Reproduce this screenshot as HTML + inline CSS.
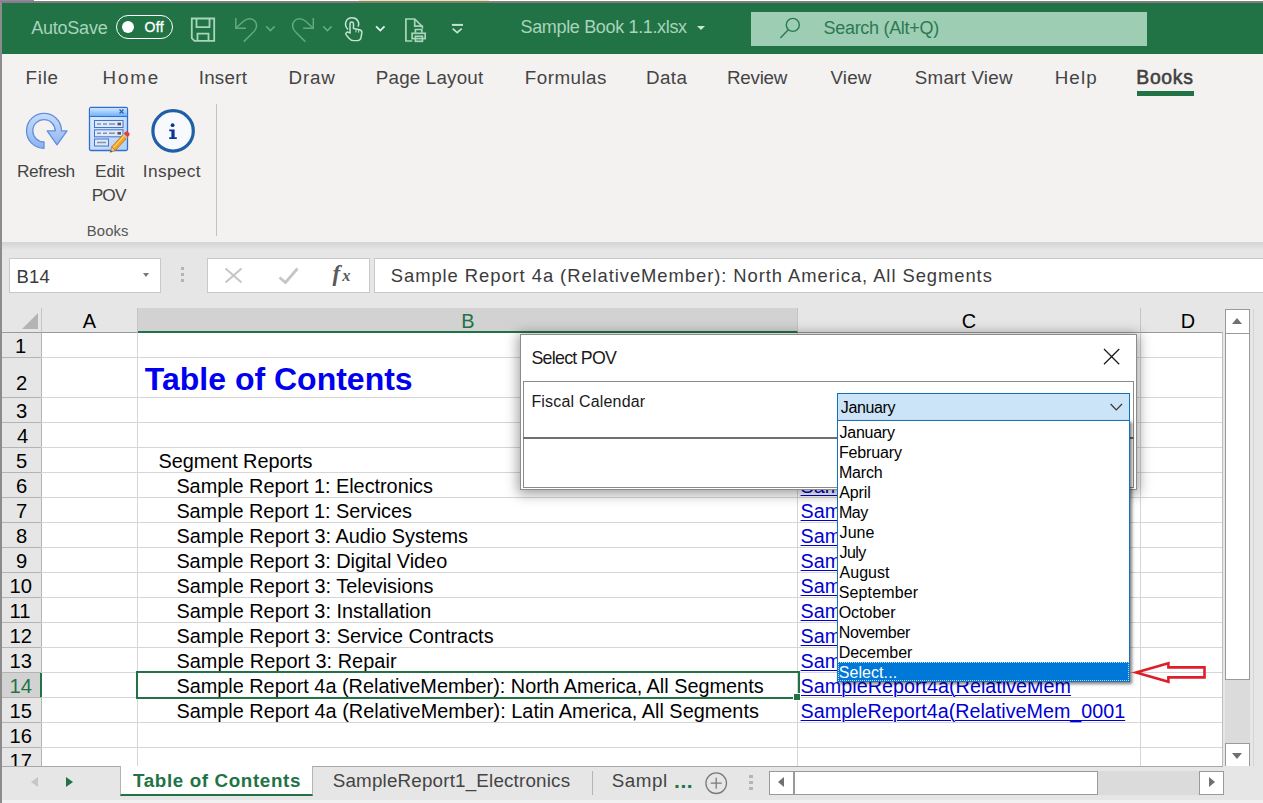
<!DOCTYPE html>
<html><head><meta charset="utf-8"><title>Sample Book 1.1.xlsx</title>
<style>
*{box-sizing:border-box;margin:0;padding:0}
html,body{width:1263px;height:803px;overflow:hidden;background:#f3f2f1;font-family:"Liberation Sans",sans-serif;}
.a{position:absolute}
#root{position:relative;width:1263px;height:803px;overflow:hidden;background:#f3f2f1}
.t{position:absolute;white-space:nowrap;line-height:1}
.hl{position:absolute;left:41px;width:1181px;height:1px;background:#d6d6d6}
.vl{position:absolute;top:333px;width:1px;height:433px;background:#d6d6d6}
.rh{position:absolute;left:2px;width:40px;background:#e6e6e6;border-bottom:1px solid #b4b4b4;border-right:1px solid #b4b4b4}
.ch{position:absolute;top:308px;height:25px;background:#e6e6e6;border-right:1px solid #c4c4c4;border-bottom:1px solid #9a9a9a}
.lk{text-decoration:underline;text-decoration-thickness:1.4px;text-underline-offset:2.2px}
</style></head><body><div id="root">

<div class="a" style="left:0;top:0;width:1263px;height:1px;background:#fff"></div>
<div class="a" style="left:0;top:0;width:34px;height:1px;background:#9a82b0"></div>
<div class="a" style="left:359px;top:0;width:130px;height:1px;background:#efe9a0"></div>
<div class="a" style="left:0;top:1px;width:1263px;height:1.5px;background:#808080"></div>

<div class="a" style="left:0;top:2.500px;width:1263px;height:51.100px;background:#217346"></div>
<div class="t" style="left:31.30px;top:19.00px;font-size:18px;color:#a8d4bb;letter-spacing:-0.243px;">AutoSave</div>
<div class="a" style="left:115.8px;top:15.2px;width:57.2px;height:23.4px;border:1.4px solid #fff;border-radius:12px"></div>
<div class="a" style="left:122px;top:21px;width:12.2px;height:12.2px;border-radius:50%;background:#fff"></div>
<div class="t" style="left:144.40px;top:20.00px;font-size:14px;color:#fff;letter-spacing:0.400px;-webkit-text-stroke:0.35px #fff;">Off</div>
<svg class="a" style="left:0;top:0" width="500" height="53" viewBox="0 0 500 53" fill="none">
<g stroke="#a9d6bb" stroke-width="1.800">
<path d="M191.800 18.500 H214.200 V40.900 H194.500 L191.800 38.200 Z"/><path d="M196.500 18.700 V27.200 H209.500 V18.700"/><path d="M197.500 40.700 V33.700 H208.500 V40.700"/></g>
<g stroke="#62a883" stroke-width="1.500">
<path d="M235.800 18 V28.300 H246"/><path d="M236.300 27.800 L243.500 21.300 C247.500 17.800 252.500 18.200 255 21.300 C257.800 24.800 256.500 29.500 253 32.500 L243.800 41.600"/>
<path d="M266.200 26.400 L270.400 30.600 L274.600 26.400"/>
<path d="M313.300 18 V28.300 H303.100"/><path d="M312.800 27.800 L305.600 21.300 C301.600 17.800 296.600 18.200 294.100 21.300 C291.300 24.800 292.600 29.500 296.100 32.500 L305.300 41.600"/>
<path d="M323.200 26.400 L327.400 30.600 L331.600 26.400"/></g>
<g stroke="#c4e4d1" stroke-width="1.500" transform="translate(185 9.600) scale(1 0.970)">
<path d="M163 20.500 C158.500 16 160.500 8.500 167 8.500 C172.500 8.500 175 13.500 173 17.500"/>
<path d="M165 24 V14.500 C165 12.300 168.500 12.300 168.500 14.500 V19.500 L174.500 20.800 C176.300 21.200 177 22.300 176.800 24 L176 29 C175.600 31 174.500 32 172.500 32 H168.500 C166.500 32 165.300 31 164 29.500 L161 25.800 C160 24.500 162 22.500 163.500 23.500 Z"/>
<path d="M171 20.200 V23.500 M173.700 20.800 V23.800" stroke-width="1"/></g>
<path d="M376.100 26.400 L380.300 30.600 L384.500 26.400" stroke="#e6f3ec" stroke-width="1.800"/>
<g stroke="#a9d6bb" stroke-width="1.700">
<path d="M412.300 41 H405.900 V19 H414.700 L422.400 26.600 V28.500"/><path d="M414.700 19 V26.200 H422.800"/>
<path d="M415.400 32.800 V29.500 H421.800 V32.800"/><rect x="412.100" y="33.300" width="13.100" height="5.300"/><rect x="415.400" y="36.300" width="7" height="5"/></g>
<g stroke="#c4e4d1"><path d="M451.900 24.900 H463" stroke-width="2"/><path d="M452.700 28.600 L457.200 32.600 L461.700 28.600" stroke-width="1.700"/></g>
</svg>
<div class="t" style="left:520.50px;top:18.00px;font-size:18px;color:#a8d4bb;letter-spacing:-0.342px;">Sample Book 1.1.xlsx</div>
<div class="a" style="left:697px;top:26px;width:0;height:0;border-left:4.5px solid transparent;border-right:4.5px solid transparent;border-top:4.5px solid #c9e6d5"></div>
<div class="a" style="left:750.500px;top:11.500px;width:396.800px;height:34px;background:#9dcdb3"></div>
<svg class="a" style="left:776px;top:14px" width="28" height="28" viewBox="0 0 28 28" fill="none" stroke="#2b7a52" stroke-width="1.400"><circle cx="16.800" cy="10.900" r="6.500"/><path d="M12.300 15.700 L4.400 24"/></svg>
<div class="t" style="left:823.50px;top:19.00px;font-size:18px;color:#2b7a52;letter-spacing:-0.300px;">Search (Alt+Q)</div>
<div class="t" style="left:25.40px;top:69.00px;font-size:18.8px;color:#444;letter-spacing:0.800px;">File</div>
<div class="t" style="left:102.60px;top:69.00px;font-size:18.8px;color:#444;letter-spacing:1.800px;">Home</div>
<div class="t" style="left:198.70px;top:69.00px;font-size:18.8px;color:#444;letter-spacing:0.260px;">Insert</div>
<div class="t" style="left:288.60px;top:69.00px;font-size:18.8px;color:#444;letter-spacing:0.800px;">Draw</div>
<div class="t" style="left:375.80px;top:69.00px;font-size:18.8px;color:#444;letter-spacing:0.190px;">Page Layout</div>
<div class="t" style="left:524.80px;top:69.00px;font-size:18.8px;color:#444;letter-spacing:0.471px;">Formulas</div>
<div class="t" style="left:646.00px;top:69.00px;font-size:18.8px;color:#444;letter-spacing:0.400px;">Data</div>
<div class="t" style="left:727.00px;top:69.00px;font-size:18.8px;color:#444;letter-spacing:-0.240px;">Review</div>
<div class="t" style="left:830.40px;top:69.00px;font-size:18.8px;color:#444;letter-spacing:0.200px;">View</div>
<div class="t" style="left:914.80px;top:69.00px;font-size:18.8px;color:#444;letter-spacing:0.222px;">Smart View</div>
<div class="t" style="left:1054.70px;top:69.00px;font-size:18.8px;color:#444;letter-spacing:1.100px;">Help</div>
<div class="t" style="left:1136.30px;top:68.00px;font-size:19.4px;color:#404040;letter-spacing:0.675px;-webkit-text-stroke:0.550px #404040;">Books</div>
<div class="a" style="left:1137px;top:91px;width:57px;height:4.7px;background:#217346"></div>
<div class="a" style="left:216px;top:104px;width:1px;height:132px;background:#c4c2c0"></div>
<svg class="a" style="left:22px;top:108px" width="50" height="46" viewBox="0 0 50 46">
<defs><linearGradient id="rg" x1="0" y1="0" x2="0" y2="1"><stop offset="0" stop-color="#c9dcfa"/><stop offset="1" stop-color="#8fb3ee"/></linearGradient></defs>
<path d="M22 40.300 A17.500 17.500 0 1 1 39.500 22.900 H45 L35 36.800 L25.200 22.900 H33.200 A11.200 11.200 0 1 0 22 34 Z" fill="url(#rg)" stroke="#5f8fdf" stroke-width="1.300" stroke-linejoin="round"/>
</svg>
<svg class="a" style="left:86px;top:104px" width="48" height="52" viewBox="0 0 48 52">
<defs><linearGradient id="tg" x1="0" y1="0" x2="0" y2="1"><stop offset="0" stop-color="#cfe6ff"/><stop offset="1" stop-color="#6eb0f6"/></linearGradient>
<linearGradient id="bg" x1="0" y1="0" x2="1" y2="1"><stop offset="0" stop-color="#e2eefd"/><stop offset="1" stop-color="#b4d0f6"/></linearGradient></defs>
<rect x="3.500" y="3.500" width="38" height="43" rx="1.500" fill="url(#bg)" stroke="#2e6fd2" stroke-width="1.300"/>
<rect x="4.200" y="4.200" width="36.600" height="8" fill="url(#tg)"/>
<path d="M3.500 12.500 H41.500" stroke="#2e6fd2" stroke-width="1"/>
<path d="M33.500 5.500 L37.500 9.500 M37.500 5.500 L33.500 9.500" stroke="#2c5fb5" stroke-width="1.300"/>
<g fill="#dfe9fa" stroke="#3f74d0" stroke-width="1"><rect x="8.500" y="16.500" width="28.500" height="7"/><rect x="8.500" y="25.800" width="28.500" height="7"/><rect x="8.500" y="35" width="14" height="7"/></g>
<g stroke="#8a93a6" stroke-width="1.500"><path d="M11 20 H15 M17 20 H21 M23 20 H29"/><path d="M11 29.300 H15 M17 29.300 H21 M23 29.300 H29"/><path d="M11 38.500 H20"/></g>
<g fill="#555"><rect x="31.500" y="18.700" width="3.500" height="2.600"/><rect x="31.500" y="28" width="3.500" height="2.600"/></g>
<g transform="translate(24.300 48.300) rotate(-47.500)">
<path d="M0 0 L5 -2.600 V2.600 Z" fill="#e8c48a" stroke="#a06a20" stroke-width="0.600"/>
<path d="M0 0 L1.800 -0.900 V0.900 Z" fill="#444"/>
<rect x="5" y="-2.600" width="16" height="5.200" fill="#f2a324" stroke="#b9720f" stroke-width="0.700"/>
<path d="M5 -0.800 H21" stroke="#ffd06a" stroke-width="1.200"/>
<rect x="21" y="-2.600" width="1.800" height="5.200" fill="#c9c9c9"/>
<path d="M22.800 -2.600 H25 A2 2 0 0 1 27 -0.600 V0.600 A2 2 0 0 1 25 2.600 H22.800 Z" fill="#e8402a"/>
</g>
</svg>
<svg class="a" style="left:148px;top:106px" width="50" height="50" viewBox="0 0 50 50">
<circle cx="25.100" cy="24.900" r="20.200" fill="#f7f9fc" stroke="#1f5fa6" stroke-width="3.200"/>
<circle cx="24.600" cy="19.200" r="1.900" fill="#0a3596"/>
<path d="M21.200 23.400 H26.600 V31.200 H28.800 V33 H21.200 V31.200 H23.400 V25.200 H21.200 Z" fill="#0a3596"/>
</svg>
<div class="t" style="left:17.00px;top:163.00px;font-size:17.3px;color:#444;letter-spacing:-0.417px;">Refresh</div>
<div class="t" style="left:95.00px;top:163.00px;font-size:17.3px;color:#444;letter-spacing:-0.067px;">Edit</div>
<div class="t" style="left:91.70px;top:187.00px;font-size:17.3px;color:#444;letter-spacing:-0.850px;">POV</div>
<div class="t" style="left:142.80px;top:163.00px;font-size:17.3px;color:#444;letter-spacing:0.350px;">Inspect</div>
<div class="t" style="left:86.80px;top:224.00px;font-size:14.8px;color:#555;letter-spacing:0.125px;">Books</div>
<div class="a" style="left:2px;top:241.500px;width:1261px;height:8px;background:linear-gradient(#d3d3d3,#e6e6e6)"></div>
<div class="a" style="left:2px;top:249px;width:1261px;height:59px;background:#e6e6e6"></div>
<div class="a" style="left:9px;top:258px;width:152px;height:34.500px;background:#fff;border:1px solid #c8c8c8"></div>
<div class="t" style="left:16.50px;top:268.00px;font-size:18.5px;color:#3b3b3b;letter-spacing:0.150px;">B14</div>
<div class="a" style="left:143px;top:273px;width:0;height:0;border-left:3.700px solid transparent;border-right:3.700px solid transparent;border-top:4px solid #777"></div>
<div class="a" style="left:180.800px;top:266.800px;width:3.400px;height:3px;background:#b4b4b4;box-shadow:0 6px 0 #b4b4b4,0 12px 0 #b4b4b4"></div>
<div class="a" style="left:206.500px;top:258px;width:163px;height:34.500px;background:#fff;border:1px solid #c8c8c8"></div>
<svg class="a" style="left:220px;top:262px" width="90" height="26" viewBox="0 0 90 26" fill="none" stroke="#c6c6c6"><path d="M5.500 6.500 L21.500 20.500 M21.500 6.500 L5.500 20.500" stroke-width="2"/><path d="M59.500 15.500 L65.500 20.500 L77.500 6.500" stroke-width="2.800"/></svg>
<div class="t" style="left:332.60px;top:262.00px;font-size:23px;color:#5a5a5a;font-weight:bold;font-style:italic;font-family:'Liberation Serif', serif;">f</div>
<div class="t" style="left:342.20px;top:268.00px;font-size:16.5px;color:#5a5a5a;font-weight:bold;font-style:italic;font-family:'Liberation Serif', serif;">x</div>
<div class="a" style="left:374px;top:258px;width:890px;height:34.500px;background:#fff;border:1px solid #c8c8c8"></div>
<div class="t" style="left:390.80px;top:267.00px;font-size:18.4px;color:#3b3b3b;letter-spacing:0.939px;">Sample Report 4a (RelativeMember): North America, All Segments</div>
<div class="a" style="left:2px;top:308px;width:1221px;height:459px;background:#fff"></div>
<div class="ch" style="left:2px;width:40px"></div>
<div class="a" style="left:22px;top:312.500px;width:0;height:0;border-left:16.500px solid transparent;border-bottom:16.500px solid #b4b4b4"></div>
<div class="ch" style="left:42px;width:96px;"></div>
<div class="ch" style="left:138px;width:660px;background:#d2d2d2;border-bottom:2px solid #217346;"></div>
<div class="ch" style="left:798px;width:343px;"></div>
<div class="ch" style="left:1141px;width:82px;border-right:none;"></div>
<div class="t" style="left:82.75px;top:312.00px;font-size:19.9px;color:#000;">A</div>
<div class="t" style="left:461.20px;top:312.00px;font-size:19.9px;color:#217346;">B</div>
<div class="t" style="left:961.65px;top:312.00px;font-size:19.9px;color:#000;">C</div>
<div class="t" style="left:1180.85px;top:312.00px;font-size:19.9px;color:#000;">D</div>
<div class="rh" style="top:333.0px;height:25px;"></div>
<div class="hl" style="top:357.0px"></div>
<div class="t" style="left:15.07px;top:336.00px;font-size:20.2px;color:#000;">1</div>
<div class="rh" style="top:358.0px;height:40px;"></div>
<div class="hl" style="top:397.0px"></div>
<div class="t" style="left:16.07px;top:373.00px;font-size:20.2px;color:#000;">2</div>
<div class="rh" style="top:398.0px;height:25px;"></div>
<div class="hl" style="top:422.0px"></div>
<div class="t" style="left:16.07px;top:401.00px;font-size:20.2px;color:#000;">3</div>
<div class="rh" style="top:423.0px;height:25px;"></div>
<div class="hl" style="top:447.0px"></div>
<div class="t" style="left:17.07px;top:426.00px;font-size:20.2px;color:#000;">4</div>
<div class="rh" style="top:448.0px;height:25px;"></div>
<div class="hl" style="top:472.0px"></div>
<div class="t" style="left:16.07px;top:451.00px;font-size:20.2px;color:#000;">5</div>
<div class="rh" style="top:473.0px;height:25px;"></div>
<div class="hl" style="top:497.0px"></div>
<div class="t" style="left:16.07px;top:476.00px;font-size:20.2px;color:#000;">6</div>
<div class="rh" style="top:498.0px;height:25px;"></div>
<div class="hl" style="top:522.0px"></div>
<div class="t" style="left:16.07px;top:501.00px;font-size:20.2px;color:#000;">7</div>
<div class="rh" style="top:523.0px;height:25px;"></div>
<div class="hl" style="top:547.0px"></div>
<div class="t" style="left:16.07px;top:526.00px;font-size:20.2px;color:#000;">8</div>
<div class="rh" style="top:548.0px;height:25px;"></div>
<div class="hl" style="top:572.0px"></div>
<div class="t" style="left:16.07px;top:551.00px;font-size:20.2px;color:#000;">9</div>
<div class="rh" style="top:573.0px;height:25px;"></div>
<div class="hl" style="top:597.0px"></div>
<div class="t" style="left:9.53px;top:576.00px;font-size:20.2px;color:#000;">10</div>
<div class="rh" style="top:598.0px;height:25px;"></div>
<div class="hl" style="top:622.0px"></div>
<div class="t" style="left:9.53px;top:601.00px;font-size:20.2px;color:#000;">11</div>
<div class="rh" style="top:623.0px;height:25px;"></div>
<div class="hl" style="top:647.0px"></div>
<div class="t" style="left:9.53px;top:626.00px;font-size:20.2px;color:#000;">12</div>
<div class="rh" style="top:648.0px;height:25px;"></div>
<div class="hl" style="top:672.0px"></div>
<div class="t" style="left:9.53px;top:651.00px;font-size:20.2px;color:#000;">13</div>
<div class="rh" style="top:673.0px;height:25px;background:#d2d2d2;border-right:2px solid #217346;"></div>
<div class="hl" style="top:697.0px"></div>
<div class="t" style="left:9.53px;top:676.00px;font-size:20.2px;color:#217346;">14</div>
<div class="rh" style="top:698.0px;height:25px;"></div>
<div class="hl" style="top:722.0px"></div>
<div class="t" style="left:9.53px;top:701.00px;font-size:20.2px;color:#000;">15</div>
<div class="rh" style="top:723.0px;height:25px;"></div>
<div class="hl" style="top:747.0px"></div>
<div class="t" style="left:9.53px;top:726.00px;font-size:20.2px;color:#000;">16</div>
<div class="rh" style="top:748.0px;height:19.0px;"></div>
<div class="t" style="left:9.53px;top:751.00px;font-size:20.2px;color:#000;">17</div>
<div class="vl" style="left:137px"></div>
<div class="vl" style="left:797px"></div>
<div class="vl" style="left:1140px"></div>
<div class="a" style="left:1222px;top:332px;width:1px;height:435px;background:#bdbdbd"></div>
<div class="t" style="left:158.50px;top:452.00px;font-size:19.87px;color:#000;letter-spacing:-0.050px;">Segment Reports</div>
<div class="t" style="left:176.40px;top:477.00px;font-size:19.87px;color:#000;letter-spacing:-0.026px;">Sample Report 1: Electronics</div>
<div class="t" style="left:176.40px;top:502.00px;font-size:19.87px;color:#000;letter-spacing:-0.029px;">Sample Report 1: Services</div>
<div class="t" style="left:176.40px;top:527.00px;font-size:19.87px;color:#000;letter-spacing:0.007px;">Sample Report 3: Audio Systems</div>
<div class="t" style="left:176.40px;top:552.00px;font-size:19.87px;color:#000;letter-spacing:-0.014px;">Sample Report 3: Digital Video</div>
<div class="t" style="left:176.40px;top:577.00px;font-size:19.87px;color:#000;letter-spacing:0.011px;">Sample Report 3: Televisions</div>
<div class="t" style="left:176.40px;top:602.00px;font-size:19.87px;color:#000;">Sample Report 3: Installation</div>
<div class="t" style="left:176.40px;top:627.00px;font-size:19.87px;color:#000;letter-spacing:0.012px;">Sample Report 3: Service Contracts</div>
<div class="t" style="left:176.40px;top:652.00px;font-size:19.87px;color:#000;letter-spacing:0.073px;">Sample Report 3: Repair</div>
<div class="t" style="left:176.40px;top:677.00px;font-size:19.87px;color:#000;">Sample Report 4a (RelativeMember): North America, All Segments</div>
<div class="t" style="left:176.40px;top:702.00px;font-size:19.87px;color:#000;letter-spacing:0.013px;">Sample Report 4a (RelativeMember): Latin America, All Segments</div>
<div class="t" style="left:800.60px;top:477.00px;font-size:19.72px;color:#0000d4;text-decoration:underline;text-decoration-thickness:1.400px;text-underline-offset:2px;">SampleReport1_Electronics</div>
<div class="t" style="left:800.60px;top:502.00px;font-size:19.72px;color:#0000d4;text-decoration:underline;text-decoration-thickness:1.400px;text-underline-offset:2px;">SampleReport1_Services</div>
<div class="t" style="left:800.60px;top:527.00px;font-size:19.72px;color:#0000d4;text-decoration:underline;text-decoration-thickness:1.400px;text-underline-offset:2px;">SampleReport3_AudioSystems</div>
<div class="t" style="left:800.60px;top:552.00px;font-size:19.72px;color:#0000d4;text-decoration:underline;text-decoration-thickness:1.400px;text-underline-offset:2px;">SampleReport3_DigitalVideo</div>
<div class="t" style="left:800.60px;top:577.00px;font-size:19.72px;color:#0000d4;text-decoration:underline;text-decoration-thickness:1.400px;text-underline-offset:2px;">SampleReport3_Televisions</div>
<div class="t" style="left:800.60px;top:602.00px;font-size:19.72px;color:#0000d4;text-decoration:underline;text-decoration-thickness:1.400px;text-underline-offset:2px;">SampleReport3_Installation</div>
<div class="t" style="left:800.60px;top:627.00px;font-size:19.72px;color:#0000d4;text-decoration:underline;text-decoration-thickness:1.400px;text-underline-offset:2px;">SampleReport3_ServiceContracts</div>
<div class="t" style="left:800.60px;top:652.00px;font-size:19.72px;color:#0000d4;text-decoration:underline;text-decoration-thickness:1.400px;text-underline-offset:2px;">SampleReport3_Repair</div>
<div class="t" style="left:800.60px;top:677.00px;font-size:19.72px;color:#0000d4;letter-spacing:0.040px;text-decoration:underline;text-decoration-thickness:1.400px;text-underline-offset:2px;">SampleReport4a(RelativeMem</div>
<div class="t" style="left:800.60px;top:702.00px;font-size:19.72px;color:#0000d4;letter-spacing:0.013px;text-decoration:underline;text-decoration-thickness:1.400px;text-underline-offset:2px;">SampleReport4a(RelativeMem_0001</div>
<div class="t" style="left:144.80px;top:363.00px;font-size:32px;color:#0000ee;font-weight:bold;">Table of Contents</div>
<div class="a" style="left:136px;top:671px;width:664px;height:28px;border:2px solid #217346"></div>
<div class="a" style="left:793px;top:693px;width:8px;height:8px;background:#217346;border:1px solid #fff;"></div>
<div class="a" style="left:1223px;top:308px;width:40px;height:459px;background:#e6e6e6"></div>
<div class="a" style="left:1253px;top:309px;width:1px;height:491px;background:#d4d4d4"></div>
<div class="a" style="left:1225px;top:333px;width:25px;height:411px;background:#dbdbdb"></div>
<div class="a" style="left:1225px;top:333px;width:25px;height:347px;background:#fff;border:1px solid #9a9a9a;border-top:none"></div>
<div class="a" style="left:1225px;top:309px;width:25px;height:24.500px;background:#fff;border:1px solid #9a9a9a"></div>
<div class="a" style="left:1232px;top:318px;width:0;height:0;border-left:5.500px solid transparent;border-right:5.500px solid transparent;border-bottom:6px solid #707070"></div>
<div class="a" style="left:1225px;top:743px;width:25px;height:24.500px;background:#fff;border:1px solid #9a9a9a"></div>
<div class="a" style="left:1232px;top:752.500px;width:0;height:0;border-left:5.500px solid transparent;border-right:5.500px solid transparent;border-top:6px solid #707070"></div>

<div class="a" style="left:2px;top:766px;width:1261px;height:34px;background:#e6e6e6;border-top:1px solid #a8a8a8"></div>
<div class="a" style="left:1223px;top:766px;width:40px;height:2px;background:#e6e6e6"></div>
<div class="a" style="left:30.500px;top:776.700px;width:0;height:0;border-top:5.600px solid transparent;border-bottom:5.600px solid transparent;border-right:7px solid #c6c6c6"></div>
<div class="a" style="left:65.500px;top:776.700px;width:0;height:0;border-top:5.600px solid transparent;border-bottom:5.600px solid transparent;border-left:7.200px solid #217346"></div>
<div class="a" style="left:120px;top:766px;width:193px;height:30.300px;background:#fff;border-left:1px solid #b4b4b4;border-right:1px solid #b4b4b4;border-bottom:2.300px solid #217346"></div>

<div class="t" style="left:133.00px;top:772.00px;font-size:18.8px;color:#217346;font-weight:bold;letter-spacing:0.637px;">Table of Contents</div>
<div class="t" style="left:332.70px;top:772.00px;font-size:18.8px;color:#444;letter-spacing:0.192px;">SampleReport1_Electronics</div>
<div class="a" style="left:592px;top:770.500px;width:1px;height:24.500px;background:#b4b4b4"></div>
<div class="t" style="left:611.80px;top:772.00px;font-size:18.8px;color:#444;letter-spacing:0.525px;">Sampl</div>
<div class="t" style="left:674.00px;top:770.00px;font-size:21px;color:#217346;font-weight:bold;letter-spacing:0.600px;">...</div>
<svg class="a" style="left:704px;top:770.500px" width="24" height="24" viewBox="0 0 24 24" fill="none" stroke="#7a7a7a" stroke-width="1.300"><circle cx="12.200" cy="12.200" r="10.300"/><path d="M12.200 6.700 V17.700 M6.700 12.200 H17.700"/></svg>
<div class="a" style="left:749px;top:775px;width:3.500px;height:3px;background:#b4b4b4;box-shadow:0 6px 0 #b4b4b4,0 12px 0 #b4b4b4"></div>
<div class="a" style="left:794px;top:770.500px;width:405px;height:24.500px;background:#dbdbdb"></div>
<div class="a" style="left:793.500px;top:770.500px;width:304px;height:24.500px;background:#fff;border:1px solid #9a9a9a"></div>
<div class="a" style="left:769px;top:770.500px;width:25px;height:24.500px;background:#fff;border:1px solid #9a9a9a"></div>
<div class="a" style="left:778px;top:777.200px;width:0;height:0;border-top:5.400px solid transparent;border-bottom:5.400px solid transparent;border-right:6.800px solid #707070"></div>
<div class="a" style="left:1199px;top:770.500px;width:25px;height:24.500px;background:#fff;border:1px solid #9a9a9a"></div>
<div class="a" style="left:1209px;top:777.200px;width:0;height:0;border-top:5.400px solid transparent;border-bottom:5.400px solid transparent;border-left:6.800px solid #707070"></div>
<div class="a" style="left:2px;top:799.500px;width:1261px;height:4px;background:#f1f1f1"></div>

<div class="a" style="left:520px;top:334px;width:617px;height:155.500px;background:#fff;border:1px solid #8c8c8c;box-shadow:0 2px 12px 2px rgba(0,0,0,.38)"></div>
<svg class="a" style="left:1102px;top:347px" width="20" height="20" viewBox="0 0 20 20" fill="none" stroke="#1a1a1a" stroke-width="1.250"><path d="M2 2 L17.200 17.200 M17.200 2 L2 17.200"/></svg>
<div class="a" style="left:523px;top:381px;width:611px;height:106.500px;border:1px solid #8a8a8a"></div>
<div class="a" style="left:523px;top:437px;width:611px;height:2px;background:#707070"></div>

<div class="t" style="left:531.40px;top:350.00px;font-size:17.8px;color:#1a1a1a;letter-spacing:-0.711px;">Select POV</div>
<div class="t" style="left:531.40px;top:394.00px;font-size:16px;color:#1a1a1a;letter-spacing:0.186px;">Fiscal Calendar</div>
<div class="a" style="left:836.500px;top:393px;width:293.500px;height:27.500px;background:#cce4f7;border:1.200px solid #1071c0"></div>
<div class="t" style="left:840.80px;top:400.00px;font-size:16px;color:#000;letter-spacing:-0.383px;">January</div>
<svg class="a" style="left:1108px;top:401px" width="16" height="12" viewBox="0 0 16 12" fill="none" stroke="#333" stroke-width="1.200"><path d="M2.600 3 L8.300 8.800 L14 3"/></svg>
<div class="a" style="left:836.500px;top:420px;width:293.500px;height:262px;background:#fff;border:1px solid #1a6fc0;box-shadow:2px 2px 3px rgba(0,0,0,.5)"></div>
<div class="t" style="left:839.60px;top:425.00px;font-size:16px;color:#000;letter-spacing:-0.267px;">January</div>
<div class="t" style="left:838.90px;top:445.00px;font-size:16px;color:#000;letter-spacing:-0.129px;">February</div>
<div class="t" style="left:838.90px;top:465.00px;font-size:16px;color:#000;letter-spacing:-0.150px;">March</div>
<div class="t" style="left:839.30px;top:485.00px;font-size:16px;color:#000;letter-spacing:-0.150px;">April</div>
<div class="t" style="left:838.90px;top:505.00px;font-size:16px;color:#000;letter-spacing:-0.450px;">May</div>
<div class="t" style="left:839.60px;top:525.00px;font-size:16px;color:#000;letter-spacing:0.033px;">June</div>
<div class="t" style="left:839.60px;top:545.00px;font-size:16px;color:#000;letter-spacing:-0.567px;">July</div>
<div class="t" style="left:839.50px;top:565.00px;font-size:16px;color:#000;letter-spacing:0.040px;">August</div>
<div class="t" style="left:838.70px;top:585.00px;font-size:16px;color:#000;letter-spacing:0.137px;">September</div>
<div class="t" style="left:838.70px;top:605.00px;font-size:16px;color:#000;letter-spacing:-0.017px;">October</div>
<div class="t" style="left:838.70px;top:625.00px;font-size:16px;color:#000;letter-spacing:-0.314px;">November</div>
<div class="t" style="left:838.70px;top:645.00px;font-size:16px;color:#000;letter-spacing:-0.014px;">December</div>
<div class="a" style="left:837.500px;top:662px;width:291.500px;height:19px;background:#0078d7;outline:1px dotted rgba(255,255,255,.75);outline-offset:-1px"></div>
<div class="t" style="left:838.70px;top:665.00px;font-size:16px;color:#fff;letter-spacing:0.075px;">Select...</div>
<svg class="a" style="left:1120px;top:650px" width="100" height="46" viewBox="1120 650 100 46" fill="none" stroke="#de1f2a" stroke-width="2.600" stroke-linejoin="miter"><path d="M1136.100 672.500 L1168.400 663.300 V667.400 H1204.500 V677.400 H1168.400 V681.800 Z"/></svg>
<div class="a" style="left:0;top:2px;width:2.300px;height:801px;background:#8c8c8c"></div>
</div></body></html>
